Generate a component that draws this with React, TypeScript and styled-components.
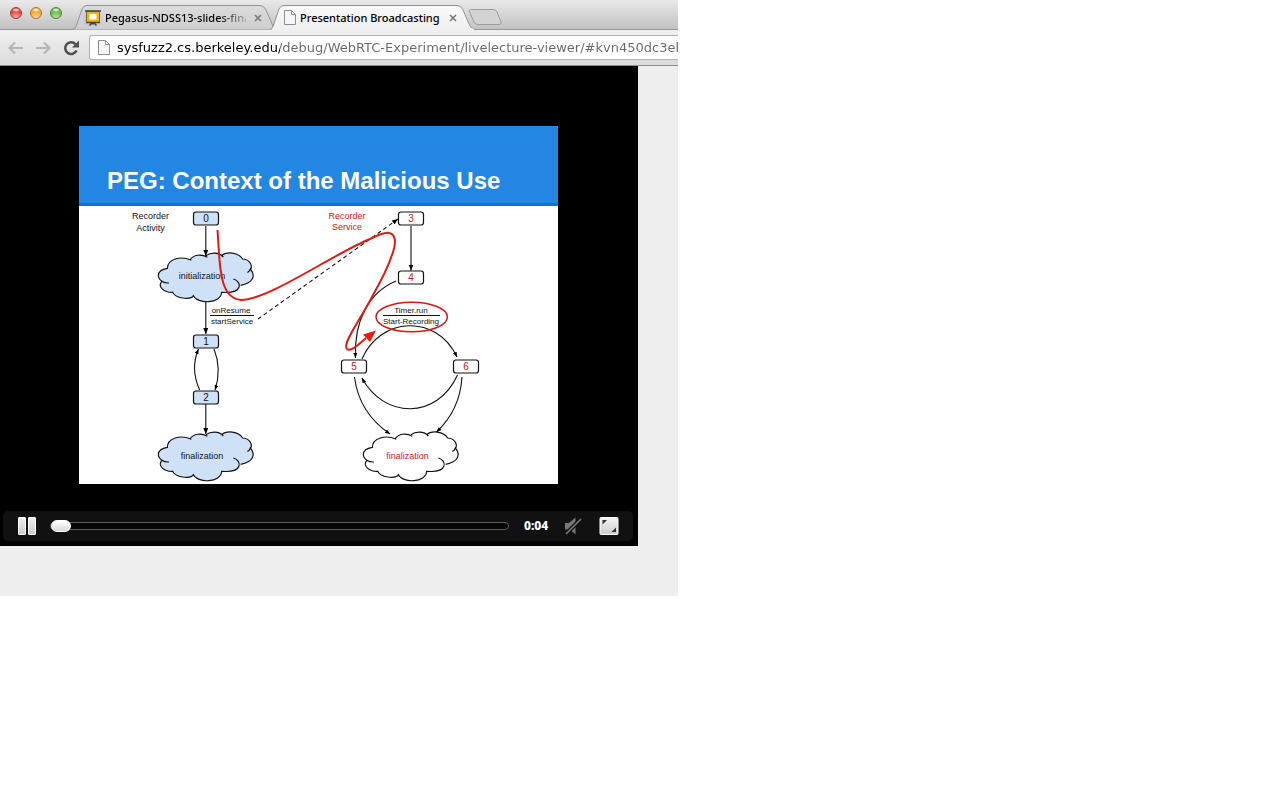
import React from "react";
import styled, { createGlobalStyle } from "styled-components";

const GlobalStyle = createGlobalStyle`
  * { box-sizing: border-box; }
  body { margin: 0; background: #fff; font-family: "Noto Sans", "Open Sans", sans-serif; }
  button { border: 0; padding: 0; background: none; font: inherit; color: inherit; }
  svg { display: block; }
`;

const BrowserWindow = styled.div`
  width: 100%;
  max-width: 678px;
  overflow: hidden;
  background: #eee;
`;

const TabStrip = styled.header`
  display: flex;
  align-items: flex-end;
  height: 30px;
  background: linear-gradient(#e9e9e9, #c2c2c2);
  border-bottom: 1px solid #989898;
`;

const WindowControls = styled.div`
  display: flex;
  align-self: flex-start;
  flex: none;
  gap: 8px;
  width: 73px;
  padding: 7px 0 0 10px;
`;

const Light = styled.button<{ $tone: string; $rim: string }>`
  width: 12px;
  height: 12px;
  border: 1px solid ${(p) => p.$rim};
  border-radius: 50%;
  background: radial-gradient(ellipse 4px 2px at 50% 20%, #fff, transparent),
    radial-gradient(circle at 50% 100%, #ffffff90, transparent 60%), ${(p) => p.$tone};
`;

const TabFrame = styled.div<{ $active?: boolean }>`
  display: grid;
  grid-template-columns: 100%;
  flex: none;
  width: 206px;
  height: 25px;
  margin-left: ${(p) => (p.$active ? "-9px" : "0")};
  margin-bottom: -1px;
  z-index: ${(p) => (p.$active ? 1 : 0)};
  > * { grid-area: 1 / 1; }
`;

const TabContent = styled.div<{ $active?: boolean }>`
  display: flex;
  align-items: center;
  min-width: 0;
  padding: ${(p) => (p.$active ? "0 19px 0 14px" : "0 17px 0 12px")};
`;

const TabIcon = styled.span`
  flex: none;
  margin-right: 4px;
`;

const TabTitle = styled.span<{ $faded?: boolean }>`
  flex: 1;
  overflow: hidden;
  white-space: nowrap;
  font-size: 11px;
  line-height: 16px;
  font-weight: 500;
  color: #000;
  mask-image: ${(p) => (p.$faded ? "linear-gradient(to right, #000 80%, transparent 105%)" : "none")};
`;

const CloseButton = styled.button`
  flex: none;
  width: 8px;
  height: 8px;
  margin-left: 8px;
`;

const NewTab = styled.button`
  flex: none;
  width: 34px;
  height: 17px;
  margin: 0 0 3px -8px;
  z-index: 1;
`;

const Toolbar = styled.nav`
  display: flex;
  align-items: center;
  height: 36px;
  padding-left: 7px;
  background: linear-gradient(#f0f0f0, #dcdcdc);
  border-bottom: 1px solid #8c8c8c;
`;

const ToolButton = styled.button`
  flex: none;
  width: 16px;
  height: 16px;
  margin-right: 12px;
`;

const AddressBar = styled.label`
  display: flex;
  align-items: center;
  flex: 1;
  height: 25px;
  padding-left: 8px;
  margin-left: -2px;
  overflow: hidden;
  background: #fff;
  border: 1px solid #b2b2b2;
  border-right: 0;
  border-radius: 3px 0 0 3px;
`;

const AddressInput = styled.input`
  flex: 1;
  min-width: 0;
  height: 23px;
  margin-left: 7px;
  padding: 0;
  border: 0;
  outline: 0;
  font: 13px/20px "DejaVu Sans", sans-serif;
  color: transparent;
  background: linear-gradient(to right, #000 163px, #686868 163px);
  background-clip: text;
`;

const Page = styled.main`
  padding: 0 40px 50px 0;
`;

const Player = styled.section`
  padding: 60px 0 5px;
  background: #000;
`;

const Slide = styled.article`
  margin: 0 80px 27px 79px;
  background: #fff;
`;

const SlideHeader = styled.header`
  display: flex;
  align-items: flex-end;
  height: 80px;
  padding: 0 28px 8px;
  background: #2386e2;
  border-bottom: 3px solid #1f6dbd;
`;

const SlideTitle = styled.h1`
  margin: 0;
  font: bold 24px/28px "Liberation Sans", Arial, sans-serif;
  color: #fff;
  white-space: nowrap;
`;

const Diagram = styled.svg`
  width: 100%;
  height: auto;
  font-family: "Liberation Sans", Arial, sans-serif;
  font-size: 9px;
  text-anchor: middle;
`;

const Controls = styled.div`
  display: flex;
  align-items: center;
  height: 30px;
  margin: 0 5px 0 3px;
  padding: 0 14px 0 15px;
  background: #111;
  border-radius: 5px;
`;

const PauseButton = styled.button`
  display: flex;
  flex: none;
  gap: 2px;
  margin-right: 14px;
`;

const PauseBar = styled.span`
  width: 8px;
  height: 18px;
  border: 1px solid #fff;
  border-radius: 1px;
  background: linear-gradient(#eee, #ccc);
`;

const Seek = styled.input`
  flex: 1;
  min-width: 0;
  height: 12px;
  margin: 0;
  appearance: none;
  background: transparent;
  &::-webkit-slider-runnable-track {
    height: 8px;
    border: 1px solid #5c5c5c;
    border-radius: 4px;
    background: #060606;
  }
  &::-webkit-slider-thumb {
    appearance: none;
    width: 20px;
    height: 12px;
    margin-top: -3px;
    border: 1px solid #fff;
    border-radius: 6px;
    background: linear-gradient(#fff, #d8d8d8);
  }
`;

const Time = styled.time`
  flex: none;
  width: 26px;
  margin: 0 13px 0 15px;
  font-size: 12px;
  line-height: 16px;
  font-weight: 800;
  color: #fff;
`;

const IconButton = styled.button`
  flex: none;
  width: 20px;
  height: 20px;
  & + & { margin-left: 16px; }
`;

function TabShape({ active }: { active?: boolean }) {
  return (
    <svg width="206" height="25" viewBox="0 0 206 25" aria-hidden="true">
      <defs>
        <linearGradient id={active ? "tabOn" : "tabOff"} x2="0" y2="1">
          <stop stopColor={active ? "#f9f9f9" : "#dcdcdc"} />
          <stop offset="1" stopColor={active ? "#efefef" : "#cecece"} />
        </linearGradient>
      </defs>
      <path
        d="M0 24.5Q2 24 3 21.500L9 4Q10.500 .5 14 .5H187Q191 .5 193 5L200 21Q202 24.500 206 24.500"
        fill={`url(#${active ? "tabOn" : "tabOff"})`}
        stroke="#929292"
      />
      {active && <path d="M2 24.500H204" stroke="#efefef" strokeWidth="2" />}
    </svg>
  );
}

const Cross = () => (
  <svg width="8" height="8" viewBox="0 0 8 8" aria-hidden="true">
    <path d="M1 1L7 7M7 1L1 7" stroke="#777" strokeWidth="1.500" />
  </svg>
);

const PageIcon = () => (
  <svg width="12" height="15" viewBox="0 0 12 15" aria-hidden="true">
    <path d="M.5.5H7.500L11.500 4.500V14.500H.5Z" fill="#f6f6f6" stroke="#8d8d8d" />
    <path d="M7.500.5V4.500H11.500" fill="none" stroke="#8d8d8d" />
  </svg>
);

const GlowingSvg = styled.svg`
  overflow: visible;
`;

const SlidesIcon = () => (
  <GlowingSvg width="16" height="16" viewBox="0 0 16 16" aria-hidden="true">
    <defs>
      <radialGradient id="iconGlow">
        <stop stopColor="#6fa8ff" />
        <stop offset="1" stopColor="#a8c8f5" stopOpacity="0" />
      </radialGradient>
    </defs>
    <ellipse cx="7" cy="8" rx="12" ry="11" fill="url(#iconGlow)" />
    <path d="M1.500 1.500H14.500V12.500H1.500Z" fill="#f4b400" stroke="#8a6a1c" />
    <path d="M4.500 4H11.500V9.500H4.500Z" fill="#fff" />
    <path d="M0 1H16M1 12.500H15M8 13V14.500M4.500 15.500L6.500 13.500H9.500L11.500 15.500" stroke="#444" strokeWidth="1.500" fill="none" />
  </GlowingSvg>
);

const ArrowIcon = ({ forward }: { forward?: boolean }) => (
  <svg width="16" height="16" viewBox="0 0 16 16" aria-hidden="true">
    <path
      d={forward ? "M1 8H15M9 2.500L14.500 8L9 13.500" : "M16 8H2M8 2.500L2.500 8L8 13.500"}
      fill="none"
      stroke="#b4b4b4"
      strokeWidth="2"
    />
  </svg>
);

const ReloadIcon = () => (
  <svg width="16" height="16" viewBox="0 0 16 16" aria-hidden="true">
    <path d="M12.500 4.200A5.900 5.900 0 1 0 13.500 10.500" fill="none" stroke="#505050" strokeWidth="2.500" />
    <path d="M16 .5V7.500H9Z" fill="#505050" />
  </svg>
);

const MuteIcon = () => (
  <svg width="20" height="20" viewBox="0 0 20 20" aria-hidden="true">
    <path d="M2 7H6L12.500 1.500V18.500L7 13.500H2Z" fill="#777" />
    <path d="M2 19L19 2" stroke="#111" strokeWidth="4" />
    <path d="M3 18L18 3" stroke="#777" strokeWidth="1.700" />
  </svg>
);

const FullscreenIcon = () => (
  <svg width="20" height="20" viewBox="0 0 20 20" aria-hidden="true">
    <defs>
      <linearGradient id="screenFill" x2="0" y2="1">
        <stop stopColor="#f4f4f4" />
        <stop offset="1" stopColor="#cdcdcd" />
      </linearGradient>
    </defs>
    <rect x="1" y="1.500" width="18" height="17" rx="1" fill="url(#screenFill)" stroke="#fff" />
    <path d="M3.500 4H8L3.500 8.500ZM17 11.500V16H12.500Z" fill="#333" />
  </svg>
);

const RED = "#d01a14";
const BLUE = "#cfe1f6";

/* The outline is drawn at three times its final size. */
function Cloud({ x, y, fill }: { x: number; y: number; fill: string }) {
  return (
    <g transform={`translate(${x} ${y}) scale(.33333)`}>
      <path
        d="M142 190C141 162 182 151 212 166C220 149 244 146 260 155C272 142 297 141 308 155C320 138 355 142 368 162C384 162 401 178 391 194C408 212 400 234 362 241C364 262 340 266 305 262C304 296 232 300 220 272C210 286 166 281 157 260C132 264 112 245 125 230Q115 224 115 211Q116 194 142 190Z"
        fill={fill}
      />
      <path
        d="M142 192C141 162 182 151 214 166M210 165C220 149 244 146 262 157M258 152C272 142 297 141 310 156M304 153C320 138 355 142 368 162C384 162 401 178 391 195M382 202Q388 201 391 192C408 212 400 234 362 241M340 222C364 228 373 267 305 262C304 296 232 300 219 270M222 272C210 286 166 281 157 260M160 262C132 264 112 245 125 230M147 234C132 235 115 226 115 211Q116 194 142 190"
        fill="none"
        stroke="#111"
        strokeWidth="3.500"
      />
    </g>
  );
}

const boxes = [
  { n: 0, x: 193, y: 212, fill: BLUE, ink: "#111" },
  { n: 1, x: 193, y: 335, fill: BLUE, ink: "#111" },
  { n: 2, x: 193, y: 391, fill: BLUE, ink: "#111" },
  { n: 3, x: 398, y: 212, fill: "#fff", ink: RED },
  { n: 4, x: 398, y: 271, fill: "#fff", ink: RED },
  { n: 5, x: 341, y: 360, fill: "#fff", ink: RED },
  { n: 6, x: 453, y: 360, fill: "#fff", ink: RED },
];

const straight = ["M205.800 226V256", "M205.800 301V334", "M205.800 404V434", "M411 226V270.500"];

const curves = [
  "M214 349Q222 369 215 390",
  "M199.700 390Q190 369 198.500 349",
  "M396 281C368 293 354 321 355.500 358",
  "M362 359C380 317 436 313 457 357",
  "M457.500 375C437 420 384 419 362 378",
  "M354.500 377Q359 413 390 434",
  "M462 377Q460 410 436.500 432",
];

function PermissionGraph() {
  return (
    <Diagram viewBox="79 206 479 278" role="img" aria-label="Permission event graph">
      <defs>
        <marker id="head" markerUnits="userSpaceOnUse" markerWidth="7" markerHeight="6" refX="6" refY="2.500" orient="auto">
          <path d="M0 0L6 2.500L0 5Z" fill="#000" />
        </marker>
        <marker id="smallHead" markerUnits="userSpaceOnUse" markerWidth="6" markerHeight="5" refX="5" refY="2" orient="auto">
          <path d="M0 0L5 2L0 4Z" fill="#000" />
        </marker>
      </defs>

      <Cloud x={120} y={205} fill={BLUE} />
      <Cloud x={120} y={384} fill={BLUE} />
      <Cloud x={325} y={384} fill="#fff" />

      <g fill="none" stroke="#111" strokeWidth="1.100">
        {straight.map((d) => <path key={d} d={d} markerEnd="url(#head)" />)}
        {curves.map((d) => <path key={d} d={d} markerEnd="url(#smallHead)" />)}
        <path d="M258 319L398 219" strokeDasharray="4 3" markerEnd="url(#head)" />
        <path d="M210 315.500H254M383 315.500H440" />
      </g>

      {boxes.map((b) => (
        <g key={b.n} fontSize="10">
          <rect x={b.x + 0.5} y={b.y} width="25" height="13" rx="2.500" fill={b.fill} stroke="#111" strokeWidth="1.200" />
          <text x={b.x + 13} y={b.y + 10} fill={b.ink}>{b.n}</text>
        </g>
      ))}

      <g fill="#111">
        <text x="150.500" y="219">Recorder</text>
        <text x="150.500" y="231">Activity</text>
        <text x="202" y="279">initialization</text>
        <text x="202" y="459">finalization</text>
        <g fontSize="8">
          <text x="231" y="313">onResume</text>
          <text x="232" y="324">startService</text>
          <text x="411" y="313">Timer.run</text>
          <text x="411" y="324">Start-Recording</text>
        </g>
      </g>
      <g fill={RED}>
        <text x="347" y="219">Recorder</text>
        <text x="347" y="230">Service</text>
        <text x="407.500" y="459">finalization</text>
      </g>

      <ellipse cx="411.700" cy="317" rx="35.700" ry="14.800" fill="none" stroke={RED} strokeWidth="1.500" />
      <path
        d="M217.500 230C219 250 219 262 221 272C223 288 229 299 241 300C258 300 290 282 320 265C340 254 355 245 370 239C378 235 385 232 389 233C396 234 396 243 393 252C388 268 381 281 373 295C366 309 359 319 353 330C349 337 344 346 347 349C351 352 358 345 366 338"
        fill="none"
        stroke="#dc1c10"
        strokeWidth="2"
      />
      <path d="M376 330.500L363 334.500L370 342Z" fill="#ee1b0c" />
    </Diagram>
  );
}

export default function App() {
  return (
    <>
      <GlobalStyle />
      <BrowserWindow>
        <TabStrip>
          <WindowControls>
            <Light $tone="#ea4a44" $rim="#a34540" aria-label="Close window" />
            <Light $tone="#f2a834" $rim="#a57a34" aria-label="Minimize window" />
            <Light $tone="#6cbd4c" $rim="#55843f" aria-label="Zoom window" />
          </WindowControls>
          <TabFrame>
            <TabShape />
            <TabContent>
              <TabIcon><SlidesIcon /></TabIcon>
              <TabTitle $faded>Pegasus-NDSS13-slides-final</TabTitle>
              <CloseButton aria-label="Close tab"><Cross /></CloseButton>
            </TabContent>
          </TabFrame>
          <TabFrame $active>
            <TabShape active />
            <TabContent $active>
              <TabIcon><PageIcon /></TabIcon>
              <TabTitle>Presentation Broadcasting</TabTitle>
              <CloseButton aria-label="Close tab"><Cross /></CloseButton>
            </TabContent>
          </TabFrame>
          <NewTab aria-label="New tab">
            <svg width="34" height="17" viewBox="0 0 34 17" aria-hidden="true">
              <path d="M4 .5H25Q28 .5 29 3L33 13Q33.500 15.500 31 15.500H10Q7 15.500 6 13L1.500 3Q.5.5 4 .5Z" fill="#d3d3d3" stroke="#9c9c9c" />
            </svg>
          </NewTab>
        </TabStrip>
        <Toolbar>
          <ToolButton aria-label="Back"><ArrowIcon /></ToolButton>
          <ToolButton aria-label="Forward"><ArrowIcon forward /></ToolButton>
          <ToolButton aria-label="Reload"><ReloadIcon /></ToolButton>
          <AddressBar>
            <PageIcon />
            <AddressInput
              aria-label="Address"
              defaultValue="sysfuzz2.cs.berkeley.edu/debug/WebRTC-Experiment/livelecture-viewer/#kvn450dc3eb"
            />
          </AddressBar>
        </Toolbar>
        <Page>
          <Player>
            <Slide>
              <SlideHeader>
                <SlideTitle>PEG: Context of the Malicious Use</SlideTitle>
              </SlideHeader>
              <PermissionGraph />
            </Slide>
            <Controls>
              <PauseButton aria-label="Pause"><PauseBar /><PauseBar /></PauseButton>
              <Seek type="range" min="0" max="100" defaultValue="0" aria-label="Seek" />
              <Time>0:04</Time>
              <IconButton aria-label="Unmute"><MuteIcon /></IconButton>
              <IconButton aria-label="Full screen"><FullscreenIcon /></IconButton>
            </Controls>
          </Player>
        </Page>
      </BrowserWindow>
    </>
  );
}
